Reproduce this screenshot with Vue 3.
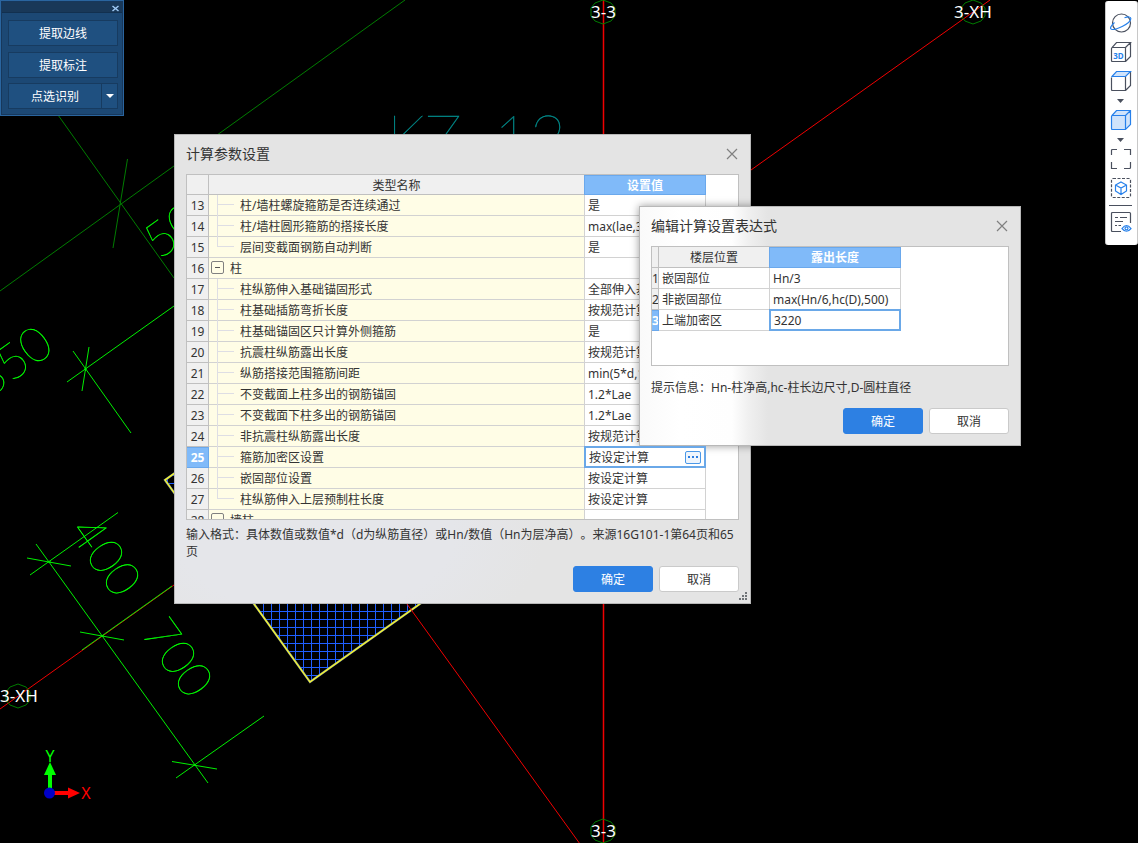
<script setup>
import { ref } from 'vue'

const rows = [
  { n: 13, name: '柱/墙柱螺旋箍筋是否连续通过', value: '是' },
  { n: 14, name: '柱/墙柱圆形箍筋的搭接长度', value: 'max(lae,300)' },
  { n: 15, name: '层间变截面钢筋自动判断', value: '是', last: true },
  { n: 16, name: '柱', value: '', group: true },
  { n: 17, name: '柱纵筋伸入基础锚固形式', value: '全部伸入基底弯折' },
  { n: 18, name: '柱基础插筋弯折长度', value: '按规范计算' },
  { n: 19, name: '柱基础锚固区只计算外侧箍筋', value: '是' },
  { n: 20, name: '抗震柱纵筋露出长度', value: '按规范计算' },
  { n: 21, name: '纵筋搭接范围箍筋间距', value: 'min(5*d,100)' },
  { n: 22, name: '不变截面上柱多出的钢筋锚固', value: '1.2*Lae' },
  { n: 23, name: '不变截面下柱多出的钢筋锚固', value: '1.2*Lae' },
  { n: 24, name: '非抗震柱纵筋露出长度', value: '按规范计算' },
  { n: 25, name: '箍筋加密区设置', value: '按设定计算', active: true },
  { n: 26, name: '嵌固部位设置', value: '按设定计算' },
  { n: 27, name: '柱纵筋伸入上层预制柱长度', value: '按设定计算', last: true },
  { n: 28, name: '墙柱', value: '', group: true }
]

const exprRows = [
  { n: 1, name: '嵌固部位', value: 'Hn/3' },
  { n: 2, name: '非嵌固部位', value: 'max(Hn/6,hc(D),500)' },
  { n: 3, name: '上端加密区', value: '3220', active: true }
]

const setting = ref('按设定计算')
const expression = ref('3220')
</script>

<template>
  <main class="workspace">
    <svg class="drawing" aria-hidden="true">
      <defs>
        <pattern id="mesh" x="7" y="3" width="8" height="8" patternUnits="userSpaceOnUse">
          <path d="M0 .5H8M.5 0V8" stroke="#1f5fff" fill="none" shape-rendering="crispEdges" />
        </pattern>
      </defs>
      <polygon points="165,480 310,682 510,540 365,338" fill="url(#mesh)" />
      <polygon points="165,480 310,682 510,540 365,338" fill="none" stroke="#8a9a90" stroke-width="2.2" />
      <polygon points="165,480 310,682 510,540 365,338" fill="none" stroke="#ffff20" stroke-width="1.1" />

      <g class="axis-green">
        <path d="M0 291L405 0M58 115L174 278M127.5 159L113 248" />
      </g>
      <g class="axis-red">
        <path d="M990 0L751 170M0 709L174 585M407 604L580 844" />
        <path d="M603.500 0V843" stroke-width="1.500" />
      </g>
      <g class="dim">
        <path d="M67 382L174 306M73 351L131 433M89 347L82 391" />
        <path d="M36 544L208 783M27 558L71 566M80 632L124 640M172 761.5L217 769" />
        <path d="M30 575L118 512.5M82 650L172 586M176 778L264 716" />
        <path d="M84 369h3M85.500 368v3M48 562h3M101 636h3M193 765h3" />
      </g>
      <g class="axis-green">
        <polygon v-for="c in [[603, 12], [973, 12], [603, 831], [18, 696]]" :key="c.join()"
          :transform="`translate(${c[0]} ${c[1]})`"
          points="0,-12 8,-9 12,-4 12,4 8,9 0,12 -8,9 -12,4 -12,-4 -8,-9" />
      </g>
      <g class="label">
        <text x="591" y="18">3-3</text>
        <text x="954" y="18">3-XH</text>
        <text x="591" y="837">3-3</text>
        <text x="0" y="702">3-XH</text>
      </g>
      <g class="dim-text">
        <text transform="translate(68 532) rotate(54.500)">400</text>
        <text transform="translate(140 633) rotate(54.500)">700</text>
        <text transform="translate(-12 399) rotate(-35.500)">350</text>
        <text transform="translate(159 260) rotate(-35.500)">50</text>
      </g>
      <g class="mark">
        <text x="387" y="160">KZ-</text>
        <text x="494" y="160">12</text>
      </g>
      <path d="M50 790V772" stroke="#0f0" stroke-width="4" />
      <polygon points="50,762 44,775 56,775" fill="#0f0" />
      <path d="M52 793H69" stroke="#f00" stroke-width="4" />
      <polygon points="80,793 68,787.5 68,798.5" fill="#f00" />
      <circle cx="49.500" cy="793" r="5.500" fill="#0000c8" />
      <text class="ucs" x="50" y="762" fill="#0f0">Y</text>
      <text class="ucs" x="86" y="799" fill="#f00">X</text>
    </svg>

    <section class="panel">
      <div class="panel-bar">
        <button class="panel-close" aria-label="关闭">
          <svg width="7" height="7" viewBox="0 0 7 7"><path d="M.5 1L6.500 6M6.500 1L.5 6" /></svg>
        </button>
      </div>
      <div class="panel-body">
        <button class="cmd">提取边线</button>
        <button class="cmd">提取标注</button>
        <div class="split">
          <button class="cmd">点选识别</button>
          <button class="cmd drop" aria-label="更多">
            <svg width="8" height="4" viewBox="0 0 8 4"><path d="M0 0H8L4 4Z" fill="#fff" /></svg>
          </button>
        </div>
      </div>
    </section>

    <nav class="tools">
      <button aria-label="动态观察">
        <svg class="ico" viewBox="0 0 22 22">
          <circle cx="11.500" cy="11" r="9" class="d" />
          <path class="b" d="M4.500 10.500C1 13.500 -.5 16.500 1.500 17.300C5 18.500 20 12 20.800 6.800C21 4.500 18 4.600 14.500 5.800" />
        </svg>
      </button>
      <button aria-label="三维">
        <svg class="ico" viewBox="0 0 22 22">
          <path class="d" d="M2.500 6.500H15.500V20.500H2.500Q1.500 20.500 1.500 19.500V7.500Q1.500 6.500 2.500 6.500ZM2 6.700L6.500 1.500H20.500L15.500 6.500M20.500 1.500V15.500L15.500 20.500" />
          <text x="8.500" y="17.500" class="t3">3D</text>
        </svg>
      </button>
      <button aria-label="顶视图">
        <svg class="ico" viewBox="0 0 22 22">
          <path d="M2 6.500L6.500 1.500H20.500L15.500 6.500Z" fill="#cfe3fb" />
          <path class="d" d="M2.500 6.500H15.500V20.500H2.500Q1.500 20.500 1.500 19.500V7.500M20.500 2V15.500L15.500 20.500" />
          <path class="b" d="M1.500 7L6.500 1.500H20.500L15.500 6.500H2" />
        </svg>
      </button>
      <button class="tri" aria-label="视图选项"><svg width="7" height="4" viewBox="0 0 7 4"><path d="M0 0H7L3.500 4Z" /></svg></button>
      <button aria-label="实体显示">
        <svg class="ico" viewBox="0 0 22 22">
          <path fill="#cfe3fb" d="M2 6.500L6.500 1.500H20.500V15.500L15.500 20.500H2.500Q1.500 20.500 1.500 19.500V7.500Z" />
          <path class="b" d="M2 6.500L6.500 1.500H20.500V15.500L15.500 20.500H2.500Q1.500 20.500 1.500 19.500V7.500ZM2 6.500H15.500V20.500M15.500 6.500L20.500 1.500" />
        </svg>
      </button>
      <button class="tri" aria-label="显示选项"><svg width="7" height="4" viewBox="0 0 7 4"><path d="M0 0H7L3.500 4Z" /></svg></button>
      <button aria-label="全屏">
        <svg class="ico" viewBox="0 0 22 22">
          <path class="d" d="M1.500 7V2.500Q1.500 1.500 2.500 1.500H7M14 1.500H20.500V7M20.500 14V19.500Q20.500 20.500 19.500 20.500H14M7 20.500H1.500V14" />
        </svg>
      </button>
      <button aria-label="局部三维">
        <svg class="ico" viewBox="0 0 22 22">
          <rect class="d" x="1.500" y="1.500" width="19" height="19" rx="1.500" stroke-dasharray="3 1.500" />
          <path class="b" d="M11 5L16.500 8V14L11 17.500L5.500 14V8ZM5.500 8L11 11L16.500 8M11 11V17.500" />
        </svg>
      </button>
      <hr />
      <button aria-label="显示设置">
        <svg class="ico" viewBox="0 0 22 22">
          <path class="d" d="M11 20.500H2.500Q1.500 20.500 1.500 19.500V2.500Q1.500 1.500 2.500 1.500H19.500Q20.500 1.500 20.500 2.500V12M5 6.500H8M10 6.500H17M5 10.500H13M5 14.500H7M8.500 14.500H11" />
          <path class="b" d="M12 17.500Q16.500 11.500 21 17.500Q16.500 23 12 17.500Z" />
          <circle cx="16.500" cy="17.300" r="1.500" class="b" />
        </svg>
      </button>
    </nav>

    <section class="dialog main" role="dialog" aria-labelledby="t1">
      <header>
        <h2 id="t1">计算参数设置</h2>
        <button class="close" aria-label="关闭"><svg width="12" height="12" viewBox="0 0 12 12"><path d="M1 1L11 11M11 1L1 11" /></svg></button>
      </header>
      <div class="grid params">
        <table>
          <thead>
            <tr><th class="no"></th><th>类型名称</th><th class="val sel">设置值</th></tr>
          </thead>
          <tbody>
            <tr v-for="r in rows" :key="r.n">
              <th class="no" :class="{ sel: r.active }">{{ r.n }}</th>
              <td class="name" :class="{ group: r.group, last: r.last }">
                <button v-if="r.group" class="fold" aria-label="折叠"></button>
                <i v-else class="twig"></i>{{ r.name }}
              </td>
              <td>
                <div v-if="r.active" class="editor">
                  <input v-model="setting" aria-label="箍筋加密区设置" />
                  <button class="more" aria-label="编辑"><i></i><i></i><i></i></button>
                </div>
                <template v-else>{{ r.value }}</template>
              </td>
            </tr>
          </tbody>
        </table>
      </div>
      <p>输入格式：具体数值或数值*d（d为纵筋直径）或Hn/数值（Hn为层净高）。来源16G101-1第64页和65页</p>
      <footer>
        <button class="btn primary">确定</button>
        <button class="btn">取消</button>
      </footer>
      <svg class="grip" width="8" height="8" viewBox="0 0 8 8">
        <path d="M6 0h2v2h-2zM3 3h2v2h-2zM6 3h2v2h-2zM0 6h2v2h-2zM3 6h2v2h-2zM6 6h2v2h-2z" />
      </svg>
    </section>

    <section class="dialog expr" role="dialog" aria-labelledby="t2">
      <header>
        <h2 id="t2">编辑计算设置表达式</h2>
        <button class="close" aria-label="关闭"><svg width="12" height="12" viewBox="0 0 12 12"><path d="M1 1L11 11M11 1L1 11" /></svg></button>
      </header>
      <div class="grid exprs">
        <table>
          <thead>
            <tr><th class="no"></th><th>楼层位置</th><th class="val sel">露出长度</th></tr>
          </thead>
          <tbody>
            <tr v-for="r in exprRows" :key="r.n">
              <th class="no" :class="{ sel: r.active }">{{ r.n }}</th>
              <td>{{ r.name }}</td>
              <td>
                <div v-if="r.active" class="editor">
                  <input v-model="expression" aria-label="上端加密区" />
                </div>
                <template v-else>{{ r.value }}</template>
              </td>
            </tr>
          </tbody>
        </table>
      </div>
      <p>提示信息：Hn-柱净高,hc-柱长边尺寸,D-圆柱直径</p>
      <footer>
        <button class="btn primary">确定</button>
        <button class="btn">取消</button>
      </footer>
    </section>
  </main>
</template>

<style>
body {
  background: #000;
}
</style>

<style scoped>
.workspace {
  position: relative;
  min-height: 100vh;
  overflow: hidden;
  background: #000;
  color: #333;
  font: 12px/17px "Noto Sans", "Noto Sans CJK SC", sans-serif;
  text-spacing-trim: space-all;
}
.workspace * {
  box-sizing: border-box;
}
button,
input {
  margin: 0;
  padding: 0;
  border: 0;
  background: none;
  color: inherit;
  font: inherit;
}
.drawing {
  position: absolute;
  inset: 0;
  width: 100%;
  height: 100%;
}
.drawing g {
  fill: none;
}
.axis-green { stroke: #007c00; }
.axis-red { stroke: #f00000; }
.dim { stroke: #00f000; }
.drawing .label {
  fill: #fff;
  font-size: 17px;
}
.drawing .dim-text {
  fill: #00ff00;
  stroke: #00ff00;
  stroke-width: 0.400;
  font: 100 48px Lato, sans-serif;
}
.drawing .mark {
  fill: #009090;
  stroke: #009090;
  stroke-width: 0.300;
  font: 100 62px Lato, sans-serif;
}
.ucs {
  font-size: 16px;
  text-anchor: middle;
}

.panel {
  position: absolute;
  left: 0;
  top: 0;
  width: 124px;
  border: 1px solid #2a659f;
  outline: 1px solid #17385c;
  outline-offset: -2px;
  background: #1c4874;
  color: #fff;
}
.panel-bar {
  display: flex;
  align-items: center;
  justify-content: flex-end;
  height: 12px;
  padding: 3px 4px 0 0;
  background: #193858;
  border-bottom: 1px solid #12304f;
}
.panel-close {
  display: flex;
}
.panel-close path {
  stroke: #9fcaf5;
  stroke-width: 1.500;
}
.panel-body {
  display: flex;
  flex-direction: column;
  gap: 6px;
  padding: 7px 5px 6px 7px;
}
.cmd {
  height: 26px;
  border: 1px solid #173b60;
  background: #1f5080;
}
.split {
  display: flex;
  margin-top: -1px;
}
.split .cmd {
  flex: 1;
}
.split .drop {
  flex: 0 0 16px;
  display: flex;
  align-items: center;
  justify-content: center;
  border-left: 0;
}

.tools {
  position: absolute;
  right: 0;
  top: 1px;
  width: 33px;
  display: flex;
  flex-direction: column;
  align-items: center;
  gap: 7px;
  padding: 11px 2px 12px 0;
  border: 0 solid #c8c8c8;
  border-width: 0 1px;
  border-radius: 3px;
  background: #fff;
}
.tools button {
  display: flex;
}
.ico {
  width: 22px;
  height: 22px;
}
.ico .d {
  fill: none;
  stroke: #4a505e;
  stroke-width: 1.200;
}
.ico .b {
  fill: none;
  stroke: #2680eb;
  stroke-width: 1.200;
}
.t3 {
  fill: #2680eb;
  font-size: 8px;
  font-weight: 700;
  text-anchor: middle;
}
.tools .tri {
  height: 3px;
}
.tri path {
  fill: #4a505e;
}
.tools hr {
  width: 23px;
  height: 1px;
  margin: -1px 0 -2px;
  border: 0;
  background: #4a505e;
}

.dialog {
  position: absolute;
  padding: 0 11px 11px;
  border: 1px solid #b8b8b8;
  background: #e4e4e4;
}
.main {
  left: 174px;
  top: 134px;
  width: 577px;
  background: radial-gradient(ellipse 230px 130px at 140px 400px, #e5e6ea, #e5e6ea 60%, #e4e4e4);
}
.expr {
  left: 639px;
  top: 206px;
  width: 382px;
  background: linear-gradient(90deg, #fafafa, #fff 40px, #fefefe 92px, #f0f0f0 108px, #e4e4e4 128px);
  box-shadow: 0 0 8px rgba(0, 0, 0, 0.4);
}
.dialog header {
  display: flex;
  align-items: center;
  justify-content: space-between;
  height: 39px;
  padding: 0 1px 2px 0;
}
.dialog h2 {
  margin: 0;
  font-size: 14px;
  font-weight: 400;
}
.close {
  display: flex;
}
.close path {
  fill: none;
  stroke: #808080;
  stroke-width: 1.200;
}
.grid {
  overflow: hidden;
  border: 1px solid #c0c0c0;
  background: #fff;
}
.params {
  height: 346px;
  padding-right: 32px;
}
.exprs {
  height: 120px;
  padding-right: 107px;
}
table {
  width: 100%;
  table-layout: fixed;
  border-collapse: separate;
  border-spacing: 0;
}
th,
td {
  position: relative;
  height: 21px;
  padding: 0 3px;
  border: 0 solid #d2d2d2;
  border-width: 0 1px 1px 0;
  overflow: visible;
  white-space: nowrap;
  text-align: left;
  font-weight: 400;
}
th {
  padding: 0;
  border-color: #c0c0c0;
  background: #f0f0f0;
  text-align: center;
}
.params thead th {
  height: 20px;
  padding-top: 2px;
}
.params .no {
  width: 22px;
}
.params .val {
  width: 121px;
}
.exprs .no {
  width: 7px;
  overflow: hidden;
}
.exprs .val {
  width: 131px;
}
th.sel {
  border-color: #6aa8ec;
  background: #80baf9;
  color: #fff;
  font-weight: 700;
  box-shadow: inset 0 1px #6aa8ec, -1px 0 #6aa8ec;
}
.name {
  padding-left: 31px;
  background: #fffde6;
}
.name.group {
  padding-left: 21px;
}
.twig::before,
.twig::after {
  content: "";
  position: absolute;
  left: 8px;
  background: #dedee4;
}
.twig::before {
  top: 0;
  bottom: -1px;
  width: 1px;
}
.last .twig::before {
  bottom: 10px;
}
.twig::after {
  top: 9px;
  width: 17px;
  height: 1px;
}
.fold {
  position: absolute;
  left: 2px;
  top: 3px;
  width: 13px;
  height: 13px;
  border: 1px solid #808080;
  border-radius: 2px;
}
.fold::before {
  content: "";
  position: absolute;
  left: 3px;
  top: 5px;
  width: 5px;
  height: 1px;
  background: #555;
}
.editor {
  position: absolute;
  inset: -1px;
  z-index: 1;
  display: flex;
  align-items: center;
  padding: 0 3px;
  border: 2px solid #6aa8e8;
  background: #fff;
}
.editor input {
  flex: 1;
  min-width: 0;
  height: 17px;
  outline: 0;
}
.more {
  display: flex;
  align-items: center;
  justify-content: center;
  gap: 2px;
  width: 16px;
  height: 13px;
  border: 1px solid #4a98e8;
  border-radius: 2px;
  background: #eef5fd;
}
.more i {
  width: 2px;
  height: 2px;
  background: #2b7de1;
}
.dialog p {
  margin: 6px 0;
}
.expr p {
  margin: 13px 0 12px;
}
.dialog footer {
  display: flex;
  justify-content: flex-end;
  gap: 6px;
}
.btn {
  width: 80px;
  height: 26px;
  border: 1px solid #cacaca;
  border-radius: 3px;
  background: #fff;
}
.btn.primary {
  border-color: #2d80e3;
  background: #2d80e3;
  color: #fff;
}
.grip {
  position: absolute;
  right: 3px;
  bottom: 3px;
  fill: #707478;
}
</style>
